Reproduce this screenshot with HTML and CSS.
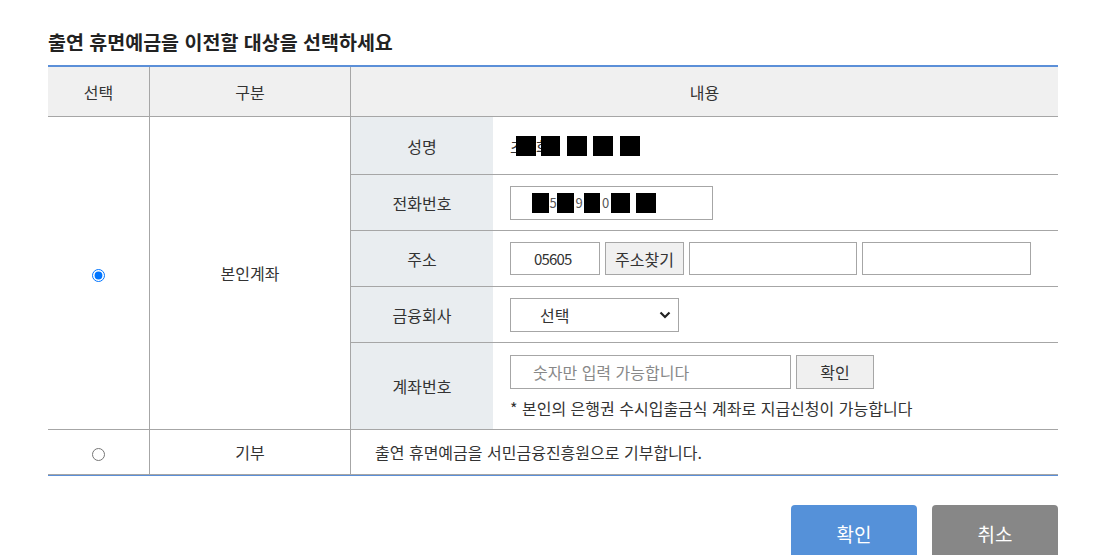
FILE: index.html
```html
<!DOCTYPE html>
<html lang="ko">
<head>
<meta charset="utf-8">
<title>휴면예금 이전 대상 선택</title>
<link rel="stylesheet" href="styles.css">
</head>
<body>
<div class="page">
  <h2 class="title">출연 휴면예금을 이전할 대상을 선택하세요</h2>
  <div class="table-wrap">
    <table class="grid">
      <thead>
        <tr><th class="c-sel">선택</th><th class="c-type">구분</th><th class="c-body">내용</th></tr>
      </thead>
      <tbody>
        <tr class="row-own">
          <td class="c-sel"><input class="radio" type="radio" name="target" checked></td>
          <td class="c-type">본인계좌</td>
          <td class="c-body nested">
            <table class="inner">
              <tr class="r-name">
                <th>성명</th>
                <td><div class="redacted"><span class="ch">초</span><span class="blk w20 over"></span><span class="ch">희</span><span class="blk w19 over"></span><span class="sp w7"></span><span class="blk w20"></span><span class="sp w6"></span><span class="blk w20"></span><span class="sp w7"></span><span class="blk w20"></span></div></td>
              </tr>
              <tr class="r-phone">
                <th>전화번호</th>
                <td><div class="input phone"><span class="blk w17"></span><span class="dg w8">5</span><span class="blk w17"></span><span class="dg w10">9</span><span class="blk w16"></span><span class="dg w11">0</span><span class="blk w19"></span><span class="sp w6"></span><span class="blk w20"></span></div></td>
              </tr>
              <tr class="r-addr">
                <th>주소</th>
                <td>
                  <div class="addr-line">
                    <input class="input zip" type="text" value="05605">
                    <button class="btn-sub find" type="button">주소찾기</button>
                    <input class="input addr1" type="text">
                    <input class="input addr2" type="text">
                  </div>
                </td>
              </tr>
              <tr class="r-bank">
                <th>금융회사</th>
                <td>
                  <div class="select-wrap">
                    <select class="select"><option>선택</option></select>
                    <svg class="chev" width="12" height="8" viewBox="0 0 12 8"><path d="M1.5 1.5L6 6l4.5-4.5" fill="none" stroke="#222" stroke-width="2.2"/></svg>
                  </div>
                </td>
              </tr>
              <tr class="r-acct">
                <th>계좌번호</th>
                <td>
                  <div class="acct-line">
                    <input class="input acct" type="text" placeholder="숫자만 입력 가능합니다">
                    <button class="btn-sub check" type="button">확인</button>
                  </div>
                  <p class="help">* 본인의 은행권 수시입출금식 계좌로 지급신청이 가능합니다</p>
                </td>
              </tr>
            </table>
          </td>
        </tr>
        <tr class="row-donate">
          <td class="c-sel"><input class="radio" type="radio" name="target"></td>
          <td class="c-type">기부</td>
          <td class="c-body text-left">출연 휴면예금을 서민금융진흥원으로 기부합니다.</td>
        </tr>
      </tbody>
    </table>
  </div>
  <div class="actions">
    <button class="btn primary" type="button">확인</button>
    <button class="btn gray" type="button">취소</button>
  </div>
</div>
</body>
</html>
```
FILE: styles.css
```css
* { box-sizing: border-box; }
body {
  margin: 0;
  background: #fff;
  color: #333;
  font-family: "Noto Sans CJK KR", "Malgun Gothic", sans-serif;
  font-size: 16px;
}
.page { width: 1100px; padding: 29px 42px 0 48px; }
.title {
  margin: 0 0 10px;
  font-size: 19.5px;
  font-weight: 700;
  line-height: 26px;
  color: #222;
}
.table-wrap { border-bottom: 1px solid #5b8fd8; }
.grid {
  width: 1010px;
  border-spacing: 0;
  table-layout: fixed;
  border-top: 2px solid #5b8fd8;
  border-bottom: 1px solid #a6a6a6;
}
.grid th, .grid td {
  padding: 0;
  font-weight: 400;
  text-align: center;
  vertical-align: middle;
  line-height: 20px;
}
.grid thead th {
  height: 50px;
  background: #f0f0f0;
  border-bottom: 1px solid #a6a6a6;
}
.c-sel { width: 102px; border-right: 1px solid #a6a6a6; }
.c-type { width: 201px; border-right: 1px solid #a6a6a6; }
.row-own > td { border-bottom: 1px solid #a6a6a6; }
.row-donate > td { height: 44px; }
.grid td.text-left { text-align: left; padding-left: 24px; }
.radio { margin: 0; width: 13px; height: 13px; vertical-align: middle; }

.inner { width: 100%; border-spacing: 0; table-layout: fixed; }
.inner th { width: 142px; background: #e9edf0; }
.grid .inner td { text-align: left; padding-left: 17px; }
.inner tr:not(:last-child) > * { border-bottom: 1px solid #a6a6a6; }
.r-name > * { height: 58px; }
.r-phone > *, .r-addr > *, .r-bank > * { height: 56px; }
.r-acct > * { height: 86px; }

.redacted, .phone { display: flex; align-items: center; }
.blk { display: inline-block; height: 20px; background: #000; flex: none; }
.blk.over { margin-left: -9px; }
.ch { flex: none; color: #333; }
.dg { display: inline-block; flex: none; text-align: center; font-size: 13px; color: #555; }
.sp { display: inline-block; flex: none; }
.w6 { width: 6px; } .w7 { width: 7px; } .w8 { width: 8px; } .w10 { width: 10px; }
.w11 { width: 11px; } .w16 { width: 16px; } .w17 { width: 17px; } .w19 { width: 19px; } .w20 { width: 20px; }

.input {
  height: 34px;
  border: 1px solid #a6a6a6;
  background: #fff;
  font: inherit;
  font-size: 16px;
  color: #333;
  padding: 0 0 0 22px;
  border-radius: 0;
  outline: none;
}
.input::placeholder { color: #888; }
.phone { width: 203px; padding-left: 21px; }
.addr-line, .acct-line { display: flex; align-items: center; gap: 5px; }
.zip { width: 90px; height: 33px; padding-left: 23px; font-size: 15px; letter-spacing: -0.8px; }
.addr1 { width: 168px; height: 33px; }
.addr2 { width: 169px; height: 33px; }
.btn-sub {
  height: 33px;
  border: 1px solid #a6a6a6;
  background: #f0f0f0;
  font: inherit;
  font-size: 16px;
  color: #333;
  padding: 0;
  border-radius: 0;
}
.find { width: 79px; }
.check { width: 78px; height: 34px; }
.acct { width: 281px; }
.select-wrap { position: relative; width: 169px; height: 34px; }
.select {
  appearance: none;
  width: 169px;
  height: 34px;
  border: 1px solid #a6a6a6;
  background: #fff;
  font: inherit;
  font-size: 16px;
  color: #333;
  padding: 0 0 0 29px;
  border-radius: 0;
}
.chev { position: absolute; right: 8px; top: 13px; pointer-events: none; }
.help { margin: 9px 0 0; font-size: 16px; line-height: 20px; color: #333; }

.actions { display: flex; justify-content: flex-end; gap: 15px; margin-top: 29px; }
.btn {
  width: 126px;
  height: 56px;
  border: none;
  border-radius: 4px;
  color: #fff;
  font: inherit;
  font-size: 19px;
}
.btn.primary { background: #5591d9; }
.btn.gray { background: #878787; }
```
